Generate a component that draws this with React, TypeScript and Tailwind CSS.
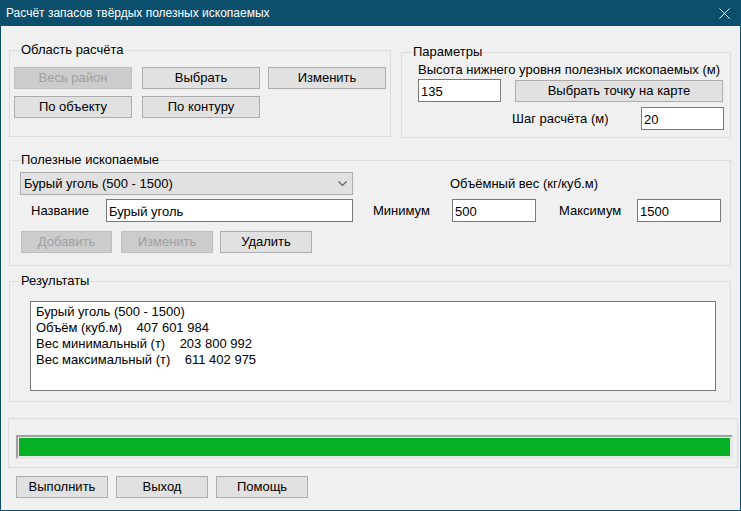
import React from "react";

const font = "font-['Liberation_Sans',Arial,sans-serif]";

function Btn({ children, w, disabled, className = "" }: { children: React.ReactNode; w: string; disabled?: boolean; className?: string }) {
  return (
    <div
      className={[
        "h-[22px] flex items-center justify-center border shrink-0",
        w,
        disabled ? "bg-[#cccccc] border-[#bfbfbf] text-[#a0a0a0]" : "bg-[#e1e1e1] border-[#adadad] text-black",
        className,
      ].join(" ")}
    >
      {children}
    </div>
  );
}

function Field({ value, w, className = "" }: { value: string; w: string; className?: string }) {
  return (
    <div className={["h-[23px] bg-white border border-[#7a7a7a] pl-[2px] flex items-start pt-[2px] shrink-0", w, className].join(" ")}>
      {value}
    </div>
  );
}

function Group({ title, className = "", children }: { title: string; className?: string; children: React.ReactNode }) {
  return (
    <fieldset className={["border border-[#dcdcdc] min-w-0", className].join(" ")}>
      <legend className="ml-[10px] px-[1px] leading-[16px]">{title}</legend>
      {children}
    </fieldset>
  );
}

export default function App() {
  return (
    <div className={`w-[741px] h-[511px] bg-[#0b4f6c] flex flex-col text-[13px] text-black ${font}`}>
      <div className="h-[26px] flex items-center justify-between pl-[6px] pr-[11px] text-white text-[12px] shrink-0">
        <span>Расчёт запасов твёрдых полезных ископаемых</span>
        <svg width="11" height="11" viewBox="0 0 11 11">
          <path d="M0.5 0.5 L10.5 10.5 M10.5 0.5 L0.5 10.5" stroke="white" strokeWidth="1" />
        </svg>
      </div>
      <div className="flex-1 mx-[1px] mb-[1px] bg-[#f0f0f0] flex flex-col">
        {/* top row */}
        <div className="flex items-start mt-[16px]">
          <Group title="Область расчёта" className="ml-[8px] w-[382px] h-[95px]">
            <div className="pl-[4px] pt-[9px] flex flex-col gap-[7px]">
              <div className="flex">
                <Btn w="w-[118px]" disabled>Весь район</Btn>
                <Btn w="w-[118px]" className="ml-[10px]">Выбрать</Btn>
                <Btn w="w-[118px]" className="ml-[8px]">Изменить</Btn>
              </div>
              <div className="flex">
                <Btn w="w-[118px]">По объекту</Btn>
                <Btn w="w-[118px]" className="ml-[10px]">По контуру</Btn>
              </div>
            </div>
          </Group>
          <Group title="Параметры" className="ml-[10px] mt-[2px] w-[330px] h-[94px]">
            <div className="pl-[16px] flex flex-col">
              <div className="mt-[2px] leading-[16px]">Высота нижнего уровня полезных ископаемых (м)</div>
              <div className="flex items-start mt-[1px]">
                <Field value="135" w="w-[83px]" />
                <Btn w="w-[208px]" className="ml-[14px] mt-[1px]">Выбрать точку на карте</Btn>
              </div>
              <div className="flex items-center mt-[5px]">
                <span className="ml-[94px] w-[129px]">Шаг расчёта (м)</span>
                <Field value="20" w="w-[83px]" />
              </div>
            </div>
          </Group>
        </div>

        {/* minerals */}
        <Group title="Полезные ископаемые" className="ml-[8px] mt-[14px] w-[722px] h-[114px]">
          <div className="pl-[10px] flex flex-col">
            <div className="flex items-center mt-[4px]">
              <div className="w-[333px] h-[23px] bg-[#e1e1e1] border border-[#adadad] flex items-center justify-between pl-[3px] pr-[5px]">
                <span>Бурый уголь (500 - 1500)</span>
                <svg width="9" height="6" viewBox="0 0 9 6">
                  <path d="M0.5 0.5 L4.5 4.5 L8.5 0.5" stroke="#606060" strokeWidth="1.2" fill="none" />
                </svg>
              </div>
              <span className="ml-[97px]">Объёмный вес (кг/куб.м)</span>
            </div>
            <div className="flex items-center mt-[4px]">
              <span className="ml-[11px] w-[75px]">Название</span>
              <Field value="Бурый уголь" w="w-[247px]" />
              <span className="ml-[20px] w-[79px]">Минимум</span>
              <Field value="500" w="w-[84px]" />
              <span className="ml-[23px] w-[78px]">Максимум</span>
              <Field value="1500" w="w-[84px]" />
            </div>
            <div className="flex mt-[9px] ml-[1px]">
              <Btn w="w-[91px]" disabled>Добавить</Btn>
              <Btn w="w-[92px]" disabled className="ml-[9px]">Изменить</Btn>
              <Btn w="w-[92px]" className="ml-[7px]">Удалить</Btn>
            </div>
          </div>
        </Group>

        {/* results */}
        <Group title="Результаты" className="ml-[8px] mt-[7px] w-[722px] h-[129px]">
          <div className="ml-[20px] mt-[12px] w-[686px] h-[90px] bg-white border border-[#7a7a7a] pl-[5px] pt-[2px] leading-[16px] whitespace-pre">
            <div>Бурый уголь (500 - 1500)</div>
            <div>Объём (куб.м)    407 601 984</div>
            <div>Вес минимальный (т)    203 800 992</div>
            <div>Вес максимальный (т)    611 402 975</div>
          </div>
        </Group>

        {/* progress */}
        <div className="ml-[7px] mt-[16px] w-[730px] h-[50px] border border-[#dcdcdc] pl-[7px] pt-[16px]">
          <div className="w-[717px] h-[24px] border-2 border-[#a0a0a0] border-b-[#e6e6e6] border-r-[#e6e6e6] bg-[#e6e6e6] p-[1px]">
            <div className="h-full w-full bg-[#06b025]" />
          </div>
        </div>

        {/* bottom buttons */}
        <div className="flex ml-[15px] mt-[8px]">
          <Btn w="w-[92px]">Выполнить</Btn>
          <Btn w="w-[92px]" className="ml-[8px]">Выход</Btn>
          <Btn w="w-[92px]" className="ml-[8px]">Помощь</Btn>
        </div>
      </div>
    </div>
  );
}
